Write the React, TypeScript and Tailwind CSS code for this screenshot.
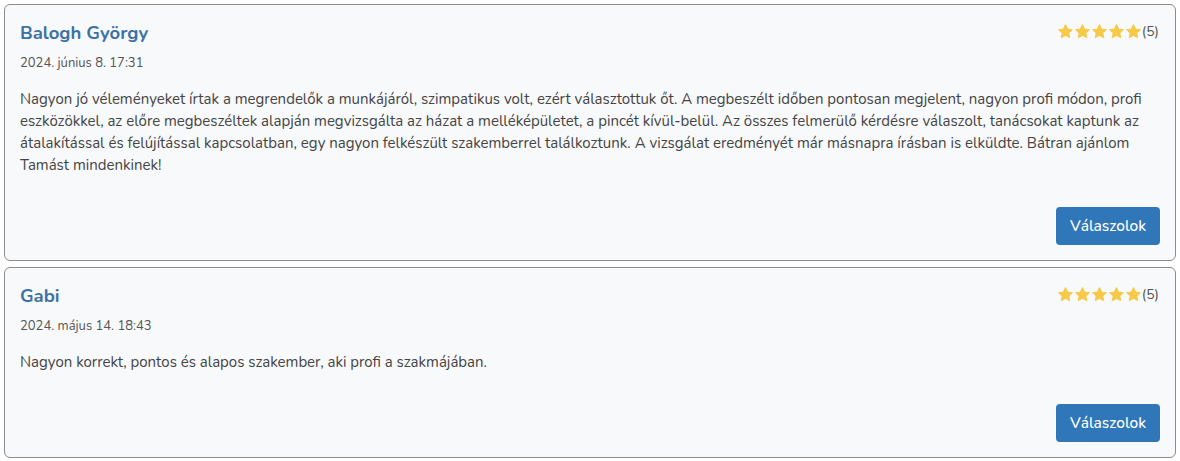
import React from "react";

const Star = () => (
  <svg viewBox="0 0 24 24" className="w-[17px] h-[17px]" fill="#f7c948">
    <path d="M12 2.5l2.9 6.1 6.6.8-4.9 4.6 1.3 6.6L12 17.3l-5.9 3.3 1.3-6.6-4.9-4.6 6.6-.8z" stroke="#f7c948" strokeWidth="1.5" strokeLinejoin="round" />
  </svg>
);

type Review = { name: string; date: string; text: string };

const reviews: Review[] = [
  {
    name: "Balogh György",
    date: "2024. június 8. 17:31",
    text: "Nagyon jó véleményeket írtak a megrendelők a munkájáról, szimpatikus volt, ezért választottuk őt. A megbeszélt időben pontosan megjelent, nagyon profi módon, profi eszközökkel, az előre megbeszéltek alapján megvizsgálta az házat a melléképületet, a pincét kívül-belül. Az összes felmerülő kérdésre válaszolt, tanácsokat kaptunk az átalakítással és felújítással kapcsolatban, egy nagyon felkészült szakemberrel találkoztunk. A vizsgálat eredményét már másnapra írásban is elküldte. Bátran ajánlom Tamást mindenkinek!",
  },
  {
    name: "Gabi",
    date: "2024. május 14. 18:43",
    text: "Nagyon korrekt, pontos és alapos szakember, aki profi a szakmájában.",
  },
];

function Card({ r }: { r: Review }) {
  return (
    <div className="border border-[#8c8c8c] rounded-[6px] bg-[#f8f9fa] px-[15px] pt-[16px] pb-[15px] flex flex-col">
      <div className="flex justify-between items-start">
        <div className="text-[18.5px] leading-[24px] font-bold text-[#3b72a6]">{r.name}</div>
        <div className="flex items-center mt-[2px] mr-[1px]">
          <div className="flex">
            <Star /><Star /><Star /><Star /><Star />
          </div>
          <span className="text-[14px] text-[#555] leading-[17px]">(5)</span>
        </div>
      </div>
      <div className="mt-[8px] text-[13px] leading-[20px] text-[#555]">{r.date}</div>
      <div className="mt-[15px] text-[15px] leading-[22px] text-[#444]">{r.text}</div>
      <div className="flex justify-end mt-[31px]">
        <button className="h-[38px] w-[104px] rounded-[4px] bg-[#2f77b8] text-white text-[15.5px] font-medium">Válaszolok</button>
      </div>
    </div>
  );
}

export default function App() {
  return (
    <div className="p-[4px] flex flex-col gap-[6px] bg-white w-[1180px]" style={{ fontFamily: '"Nunito", Lato, "Open Sans", sans-serif' }}>
      {reviews.map((r) => (
        <Card key={r.name} r={r} />
      ))}
    </div>
  );
}
